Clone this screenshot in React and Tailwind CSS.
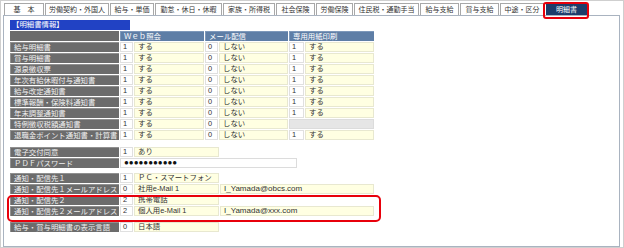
import React from "react";

const tabs = [
  ["基　本", 40],
  ["労働契約・外国人", 64],
  ["給与・単価", 44],
  ["勤怠・休日・休暇", 67],
  ["家族・所得税", 52],
  ["社会保険", 39],
  ["労働保険", 37],
  ["住民税・通勤手当", 65],
  ["給与支給", 39],
  ["賞与支給", 39],
  ["中途・区分", 44],
];

function Label({ children }) {
  return (
    <div className="h-[10px] w-[109px] shrink-0 bg-[#6c6c6c] border-t border-l border-[#909090] pl-[3px] text-[#f0f0f0] text-[7.4px] leading-[9px] whitespace-nowrap overflow-hidden">
      {children}
    </div>
  );
}

function Num({ children, w = "w-[13px]" }) {
  return (
    <div className={`h-[10px] ${w} shrink-0 bg-white border border-[#e0e0e0] pl-[2px] leading-[8px] text-[#333]`}>
      {children}
    </div>
  );
}

function Val({ children, w = "w-[70px]" }) {
  return (
    <div className={`h-[10px] ${w} shrink-0 bg-[#ffffe2] border border-[#e8e8d0] pl-[3px] leading-[8px] text-[#333] whitespace-nowrap overflow-hidden`}>
      {children}
    </div>
  );
}

function Row({ children }) {
  return <div className="flex gap-[1px] h-[10px] mt-[1px]">{children}</div>;
}

const docs = [
  ["給与明細書", true],
  ["賞与明細書", true],
  ["源泉徴収票", true],
  ["年次有給休暇付与通知書", true],
  ["給与改定通知書", true],
  ["標準報酬・保険料通知書", true],
  ["年末調整通知書", true],
  ["特例徴収税額通知書", false],
  ["退職金ポイント通知書・計算書", true],
];

export default function App() {
  return (
    <div className="relative w-[624px] h-[248px] bg-white border border-[#cfcfcf] font-[Liberation_Sans,Noto_Sans_CJK_JP,sans-serif] text-[7.4px] overflow-hidden">
      <div className="ml-[2px] mt-[2px] w-[617px]">
        <div className="flex gap-[1px] pl-[1px] h-[12px] text-[7px]">
          {tabs.map(([t, w]) => (
            <div
              key={t}
              style={{ width: w }}
              className="h-[12px] shrink-0 border-t border-l border-r border-[#a8a8a8] bg-white text-[#333] text-center leading-[11px] whitespace-nowrap"
            >
              {t}
            </div>
          ))}
          <div className="h-[11px] mt-[1px] ml-[1px] w-[41px] shrink-0 bg-[#1d3d6b] text-white text-center leading-[11px]">
            明細書
          </div>
        </div>
        <div className="h-[232px] border border-[#a9b3c0] pl-[6px] pt-[4px]">
          <div className="h-[10px] w-[120px] bg-[#2142c4] text-white pl-[2px] leading-[10px]">
            【明細書情報】
          </div>
          <div className="flex gap-[1px] h-[10px] mt-[1px]">
            <div className="h-[10px] w-[109px] bg-[#6c6c6c]" />
            <div className="h-[10px] w-[84px] bg-[#5e7ea6] border-t border-l border-[#7d98ba] text-white pl-[3px] leading-[9px]">Ｗｅｂ照会</div>
            <div className="h-[10px] w-[83px] bg-[#5e7ea6] border-t border-l border-[#7d98ba] text-white pl-[3px] leading-[9px]">メール配信</div>
            <div className="h-[10px] w-[85px] bg-[#5e7ea6] border-t border-l border-[#7d98ba] text-white pl-[3px] leading-[9px]">専用用紙印刷</div>
          </div>
          {docs.map(([name, print]) => (
            <Row key={name}>
              <Label>{name}</Label>
              <Num>1</Num>
              <Val>する</Val>
              <Num>0</Num>
              <Val w="w-[69px]">しない</Val>
              {print ? (
                <>
                  <Num w="w-[15px]">1</Num>
                  <Val w="w-[69px]">する</Val>
                </>
              ) : (
                <div className="h-[10px] w-[85px] bg-[#e6e6e6] border border-[#dcdcdc]" />
              )}
            </Row>
          ))}

          <div className="mt-[7px]">
            <div className="flex gap-[1px] h-[10px]">
              <Label>電子交付同意</Label>
              <Num>1</Num>
              <Val w="w-[85px]">あり</Val>
            </div>
            <Row>
              <Label>ＰＤＦパスワード</Label>
              <div className="h-[10px] w-[177px] bg-white border border-[#dcdcdc] pl-[3px] leading-[8px] text-[#111] text-[8px]">
                ●●●●●●●●●●●
              </div>
            </Row>
          </div>

          <div className="mt-[5px]">
            <Row>
              <Label>通知・配信先１</Label>
              <Num>1</Num>
              <Val w="w-[85px]">ＰＣ・スマートフォン</Val>
            </Row>
            <Row>
              <Label>通知・配信先１メールアドレス</Label>
              <Num>0</Num>
              <Val w="w-[85px]">社用e-Mail 1</Val>
              <Val w="w-[154px]"><span className="text-[8px]">I_Yamada@obcs.com</span></Val>
            </Row>
            <Row>
              <Label>通知・配信先２</Label>
              <Num>2</Num>
              <Val w="w-[85px]">携帯電話</Val>
            </Row>
            <Row>
              <Label>通知・配信先２メールアドレス</Label>
              <Num>2</Num>
              <Val w="w-[85px]">個人用e-Mail 1</Val>
              <Val w="w-[154px]"><span className="text-[8px]">I_Yamada@xxx.com</span></Val>
            </Row>
          </div>

          <div className="mt-[6px]">
            <Row>
              <Label>給与・賞与明細書の表示言語</Label>
              <Num>0</Num>
              <Val w="w-[85px]">日本語</Val>
            </Row>
          </div>
        </div>
      </div>

      <div className="absolute left-[542px] top-[1px] w-[46px] h-[17px] border-2 border-[#e8000b] rounded-[3px]" />
      <div className="absolute left-[6px] top-[194px] w-[374px] h-[27px] border-2 border-[#e8000b] rounded-[5px]" />
    </div>
  );
}
